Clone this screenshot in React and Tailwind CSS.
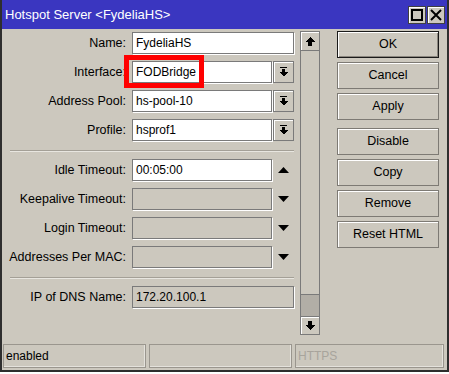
import React from "react";

const DropIcon = () => (
  <svg width="9" height="10" viewBox="0 0 9 10" shapeRendering="crispEdges">
    <rect x="1" y="0" width="7" height="1" fill="#000" />
    <rect x="3" y="2" width="3" height="3" fill="#000" />
    <polygon points="0,5 9,5 4.5,9.5" fill="#000" />
  </svg>
);

const ScrollUp = () => (
  <svg width="10" height="9" viewBox="0 0 10 9" shapeRendering="crispEdges">
    <polygon points="5,0 10,5 0,5" fill="#000" />
    <rect x="3" y="5" width="4" height="4" fill="#000" />
  </svg>
);

const ScrollDown = () => (
  <svg width="10" height="9" viewBox="0 0 10 9" shapeRendering="crispEdges">
    <rect x="3" y="0" width="4" height="4" fill="#000" />
    <polygon points="0,4 10,4 5,9" fill="#000" />
  </svg>
);

const TriUp = () => (
  <svg width="11" height="6" viewBox="0 0 11 6">
    <polygon points="5.5,0 11,6 0,6" fill="#000" />
  </svg>
);

const TriDown = () => (
  <svg width="11" height="6" viewBox="0 0 11 6">
    <polygon points="0,0 11,0 5.5,6" fill="#000" />
  </svg>
);

const Label = ({ children }) => (
  <div className="h-[22px] flex items-center justify-end text-[12.5px] text-black whitespace-nowrap">
    {children}
  </div>
);

const Input = ({ value, disabled, w = "w-[162px]" }) => (
  <div
    className={`${w} h-[22px] border border-[#7a7a7a] shadow-[1px_1px_0_#ffffff] flex items-center pl-[3px] text-[12px] text-black ${
      disabled ? "bg-[#ccc8be]" : "bg-white"
    }`}
  >
    {value}
  </div>
);

const Combo = ({ value, children }) => (
  <div className="relative flex items-center w-[162px] h-[22px]">
    <Input value={value} w="w-[140px]" />
    <div className="ml-[1px] w-[21px] h-[22px] border border-[#7a7a7a] bg-[#ccc8be] shadow-[inset_1px_1px_0_#ffffff] flex items-center justify-center">
      <DropIcon />
    </div>
    {children}
  </div>
);

const Spin = ({ value, up, disabled }) => (
  <div className="flex items-center w-[162px] h-[22px]">
    <Input value={value} w="w-[140px]" disabled={disabled} />
    <div className="w-[22px] flex items-center justify-center">{up ? <TriUp /> : <TriDown />}</div>
  </div>
);

const Sep = () => (
  <div className="ml-[8px] w-[284px] mt-[9px] mb-[7px] border-t border-[#a4a097] border-b border-b-[#e8e6e0]" />
);

const Btn = ({ children, def, className = "" }) => (
  <div
    className={`w-[102px] h-[27px] flex items-center justify-center text-[12.5px] text-black bg-[#ccc8be] border ${
      def
        ? "border-[#1a1a1a] shadow-[inset_1px_1px_0_#ffffff,inset_-1px_-1px_0_#8a867e]"
        : "border-[#7d7a74] shadow-[inset_1px_1px_0_#ffffff]"
    } ${className}`}
  >
    {children}
  </div>
);

export default function App() {
  return (
    <div className="w-[449px] h-[374px] bg-white font-['Liberation_Sans',Arial,sans-serif] overflow-hidden">
      <div className="w-[449px] h-[372px] flex flex-col bg-[#ccc8be] border-x-2 border-b-2 border-[#2e2e2e]">
        {/* Title bar */}
        <div className="h-[29px] bg-[#3a36c0] flex items-center justify-between pl-[3px] pr-[2px]">
          <span className="text-white text-[13px] whitespace-nowrap">Hotspot Server &lt;FydeliaHS&gt;</span>
          <div className="flex gap-[1px]">
            <div className="w-[18px] h-[18px] bg-[#ccc8be] border border-[#404040] shadow-[inset_1px_1px_0_#ffffff] flex items-center justify-center">
              <div className="w-[12px] h-[12px] border-2 border-black" />
            </div>
            <div className="w-[18px] h-[18px] bg-[#ccc8be] border border-[#404040] shadow-[inset_1px_1px_0_#ffffff] flex items-center justify-center">
              <svg width="12" height="12" viewBox="0 0 12 12">
                <path d="M1 1 L11 11 M11 1 L1 11" stroke="#000" strokeWidth="2" />
              </svg>
            </div>
          </div>
        </div>

        {/* Main */}
        <div className="h-[315px] flex">
          {/* Form */}
          <div className="w-[294px] pt-[3px] flex flex-col">
            <div className="grid grid-cols-[124px_162px] gap-x-[6px] gap-y-[7px]">
              <Label>Name:</Label>
              <Input value="FydeliaHS" />
              <Label>Interface:</Label>
              <Combo value="FODBridge">
                <div className="absolute left-[-8px] top-[-6px] w-[80px] h-[33px] border-[5px] border-[#ff0000]" />
              </Combo>
              <Label>Address Pool:</Label>
              <Combo value="hs-pool-10" />
              <Label>Profile:</Label>
              <Combo value="hsprof1" />
            </div>
            <Sep />
            <div className="grid grid-cols-[124px_162px] gap-x-[6px] gap-y-[7px]">
              <Label>Idle Timeout:</Label>
              <Spin value="00:05:00" up />
              <Label>Keepalive Timeout:</Label>
              <Spin disabled />
              <Label>Login Timeout:</Label>
              <Spin disabled />
              <Label>Addresses Per MAC:</Label>
              <Spin disabled />
            </div>
            <Sep />
            <div className="grid grid-cols-[124px_162px] gap-x-[6px]">
              <Label>IP of DNS Name:</Label>
              <Input value="172.20.100.1" disabled />
            </div>
          </div>

          {/* Scrollbar */}
          <div className="ml-[4px] mt-[2px] w-[20px] h-[304px] flex flex-col">
            <div className="h-[20px] border border-[#7a7a7a] shadow-[inset_1px_1px_0_#ffffff] flex items-center justify-center">
              <ScrollUp />
            </div>
            <div className="flex-1 border-x border-[#7a7a7a] flex flex-col justify-end">
              <div className="h-[22px] bg-[#b2aea6] border-t border-[#7a7a7a]" />
            </div>
            <div className="h-[19px] border border-[#7a7a7a] shadow-[inset_1px_1px_0_#ffffff] flex items-center justify-center">
              <ScrollDown />
            </div>
          </div>

          {/* Buttons */}
          <div className="ml-[17px] mt-[2px] flex flex-col gap-[4px]">
            <Btn def>OK</Btn>
            <Btn>Cancel</Btn>
            <Btn>Apply</Btn>
            <Btn className="mt-[4px]">Disable</Btn>
            <Btn>Copy</Btn>
            <Btn>Remove</Btn>
            <Btn>Reset HTML</Btn>
          </div>
        </div>

        {/* Status bar */}
        <div className="h-[24px] pl-[1px] flex gap-[3px]">
          <div className="w-[143px] h-[24px] border border-[#9a968e] shadow-[inset_-1px_-1px_0_#e4e2dc] flex items-center pl-[2px] text-[12px] text-black">
            enabled
          </div>
          <div className="w-[143px] h-[24px] border border-[#9a968e] shadow-[inset_-1px_-1px_0_#e4e2dc]" />
          <div className="w-[149px] h-[24px] border border-[#9a968e] shadow-[inset_-1px_-1px_0_#e4e2dc] flex items-center pl-[2px] text-[12px] text-[#a8a49c]">
            HTTPS
          </div>
        </div>
      </div>
    </div>
  );
}
